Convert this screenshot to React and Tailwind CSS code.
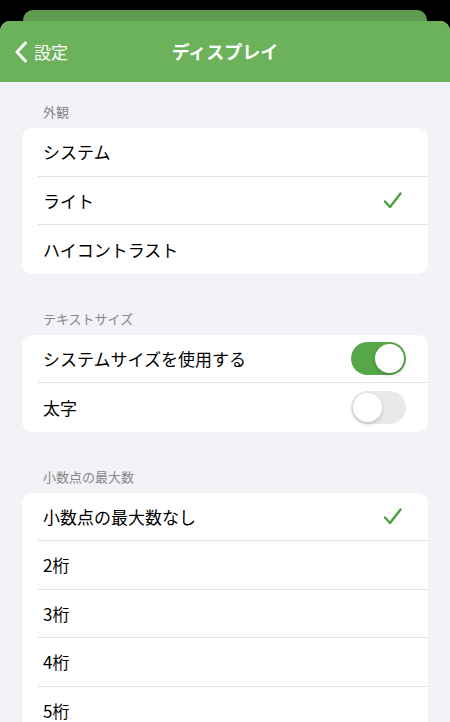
import React from 'react'

const FONT = { fontFamily: '"Noto Sans CJK JP", "Noto Sans", sans-serif' }

function Check() {
  return (
    <svg width="19" height="17" viewBox="0 0 19 17" fill="none">
      <path d="M2 9.5 L7 15 L17.5 1.5" stroke="#4d9f43" strokeWidth="2.4" strokeLinecap="round" strokeLinejoin="round" />
    </svg>
  )
}

function Toggle({ on }) {
  return (
    <div className={`w-[55px] h-[33px] rounded-full p-[2px] flex ${on ? 'bg-[#56a748] justify-end' : 'bg-[#e9e9eb] justify-start'}`}>
      <div className="w-[29px] h-[29px] rounded-full bg-white shadow-[0_2px_4px_rgba(0,0,0,0.18)]" />
    </div>
  )
}

function Row({ label, last, right, pr = 'pr-[26px]' }) {
  return (
    <div className="h-[48.5px] pl-[16px]">
      <div className={`h-full flex items-center justify-between pl-[5px] ${pr} ${last ? '' : 'border-b border-[#e3e3e7]'}`}>
        <span className="text-[17px] text-black">{label}</span>
        {right}
      </div>
    </div>
  )
}

function Section({ title, children }) {
  return (
    <div>
      <div className="pl-[43px] text-[13px] leading-[18px] text-[#86868a] mb-[7px]">{title}</div>
      <div className="mx-[22px] bg-white rounded-[10px] overflow-hidden">{children}</div>
    </div>
  )
}

export default function App() {
  return (
    <div className="w-[450px] h-[722px] overflow-hidden bg-black flex flex-col" style={FONT}>
      {/* stacked sheet behind */}
      <div className="mx-[23px] mt-[10px] h-[11px] rounded-t-[10px] bg-[#5f9c52]" />

      <div className="flex-1 rounded-t-[10px] overflow-hidden bg-[#f2f2f7]">
        {/* Nav bar */}
        <div className="h-[61px] bg-[#6bb25b] relative flex items-center justify-center">
          <div className="absolute left-[14px] top-0 h-full flex items-center gap-[6px]">
            <svg width="14" height="22" viewBox="0 0 14 22" fill="none">
              <path d="M11.5 2 L3 11 L11.5 20" stroke="white" strokeWidth="3" strokeLinecap="round" strokeLinejoin="round" />
            </svg>
            <span className="text-[17px] text-white">設定</span>
          </div>
          <span className="text-[18px] font-semibold text-white">ディスプレイ</span>
        </div>

        <div className="pt-[21px] flex flex-col gap-[36px]">
          <Section title="外観">
            <Row label="システム" />
            <Row label="ライト" right={<Check />} />
            <Row label="ハイコントラスト" last />
          </Section>

          <Section title="テキストサイズ">
            <Row label="システムサイズを使用する" right={<Toggle on />} pr="pr-[22px]" />
            <Row label="太字" right={<Toggle />} pr="pr-[22px]" last />
          </Section>

          <Section title="小数点の最大数">
            <Row label="小数点の最大数なし" right={<Check />} />
            <Row label="2桁" />
            <Row label="3桁" />
            <Row label="4桁" />
            <Row label="5桁" />
            <Row label="6桁" last />
          </Section>
        </div>
      </div>
    </div>
  )
}
